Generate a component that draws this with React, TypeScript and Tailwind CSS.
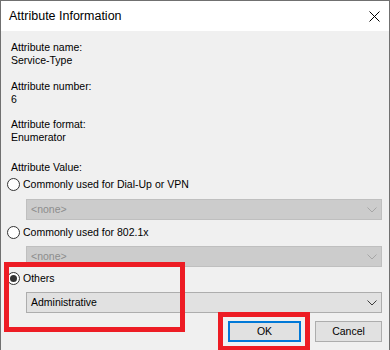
import { ReactNode } from "react"

const font = "font-['Liberation_Sans',Arial,sans-serif]"

function Chevron({ disabled }: { disabled?: boolean }) {
  return (
    <svg width="10" height="6" viewBox="0 0 10 6" className="shrink-0">
      <polyline
        points="0.5,0.5 5,5 9.5,0.5"
        fill="none"
        stroke={disabled ? "#a6a6a6" : "#3c3c3c"}
        strokeWidth="1"
      />
    </svg>
  )
}

function Radio({ checked, label }: { checked?: boolean; label: string }) {
  return (
    <div className="ml-[6px] flex h-[17px] items-center gap-[3px]">
      <span className="flex size-[13px] shrink-0 items-center justify-center rounded-full border border-[#333333] bg-white">
        {checked && <span className="size-[7px] rounded-full bg-[#333333]" />}
      </span>
      <span className="text-[10.5px] leading-[13px] text-black">{label}</span>
    </div>
  )
}

function Select({ value, disabled, className }: { value: string; disabled?: boolean; className?: string }) {
  return (
    <div
      className={
        "ml-[25px] mr-[7px] flex h-[21px] items-center justify-between border pl-[4px] pr-[4px] " +
        (disabled ? "border-[#bfbfbf] bg-[#cccccc] text-[#8c8c8c]" : "border-[#adadad] bg-[#e1e1e1] text-black") +
        " " +
        (className ?? "")
      }
    >
      <span className="text-[10.5px] leading-[13px]">{value}</span>
      <Chevron disabled={disabled} />
    </div>
  )
}

function Field({ label, value, className }: { label: string; value: string; className?: string }) {
  return (
    <div className={"ml-[10px] text-[10.5px] leading-[13px] text-black " + (className ?? "")}>
      <p>{label}</p>
      <p>{value}</p>
    </div>
  )
}

function Button({ children, primary }: { children: ReactNode; primary?: boolean }) {
  return (
    <button
      className={
        "flex h-[21px] items-center justify-center bg-[#e1e1e1] text-[10.5px] text-black " +
        (primary ? "w-[73px] border-2 border-[#0078d7]" : "w-[67px] border border-[#adadad]")
      }
    >
      {children}
    </button>
  )
}

export default function App() {
  return (
    <div className={`relative h-[350px] w-[390px] overflow-hidden border-x border-t border-[#707070] bg-[#f0f0f0] ${font}`}>
      <div className="flex h-[30px] items-center justify-between bg-white pl-[8px] pr-[9px]">
        <span className="text-[12.5px] text-black">Attribute Information</span>
        <svg width="11" height="11" viewBox="0 0 11 11">
          <path d="M0.5 0.5 L10.5 10.5 M10.5 0.5 L0.5 10.5" stroke="#000" strokeWidth="1" />
        </svg>
      </div>

      <div className="flex flex-col pt-[10px]">
        <Field label="Attribute name:" value="Service-Type" />
        <Field label="Attribute number:" value="6" className="mt-[13px]" />
        <Field label="Attribute format:" value="Enumerator" className="mt-[12px]" />
        <p className="ml-[10px] mt-[17px] text-[10.5px] leading-[13px] text-black">Attribute Value:</p>

        <div className="mt-[2px]">
          <Radio label="Commonly used for Dial-Up or VPN" />
        </div>
        <Select value="<none>" disabled className="mt-[6px]" />
        <div className="mt-[4px]">
          <Radio label="Commonly used for 802.1x" />
        </div>
        <Select value="<none>" disabled className="mt-[5px]" />
        <div className="mt-[3px]">
          <Radio checked label="Others" />
        </div>
        <Select value="Administrative" className="mt-[5px]" />

        <div className="mt-[8px] flex justify-end gap-[14px] pr-[7px]">
          <Button primary>OK</Button>
          <Button>Cancel</Button>
        </div>
      </div>

      {/* red annotation boxes */}
      <div className="pointer-events-none absolute left-[3px] top-[261px] h-[70px] w-[181px] border-[5px] border-[#ed1c24]" />
      <div className="pointer-events-none absolute left-[217px] top-[311px] h-[39px] w-[92px] border-[5px] border-[#ed1c24]" />
    </div>
  )
}
